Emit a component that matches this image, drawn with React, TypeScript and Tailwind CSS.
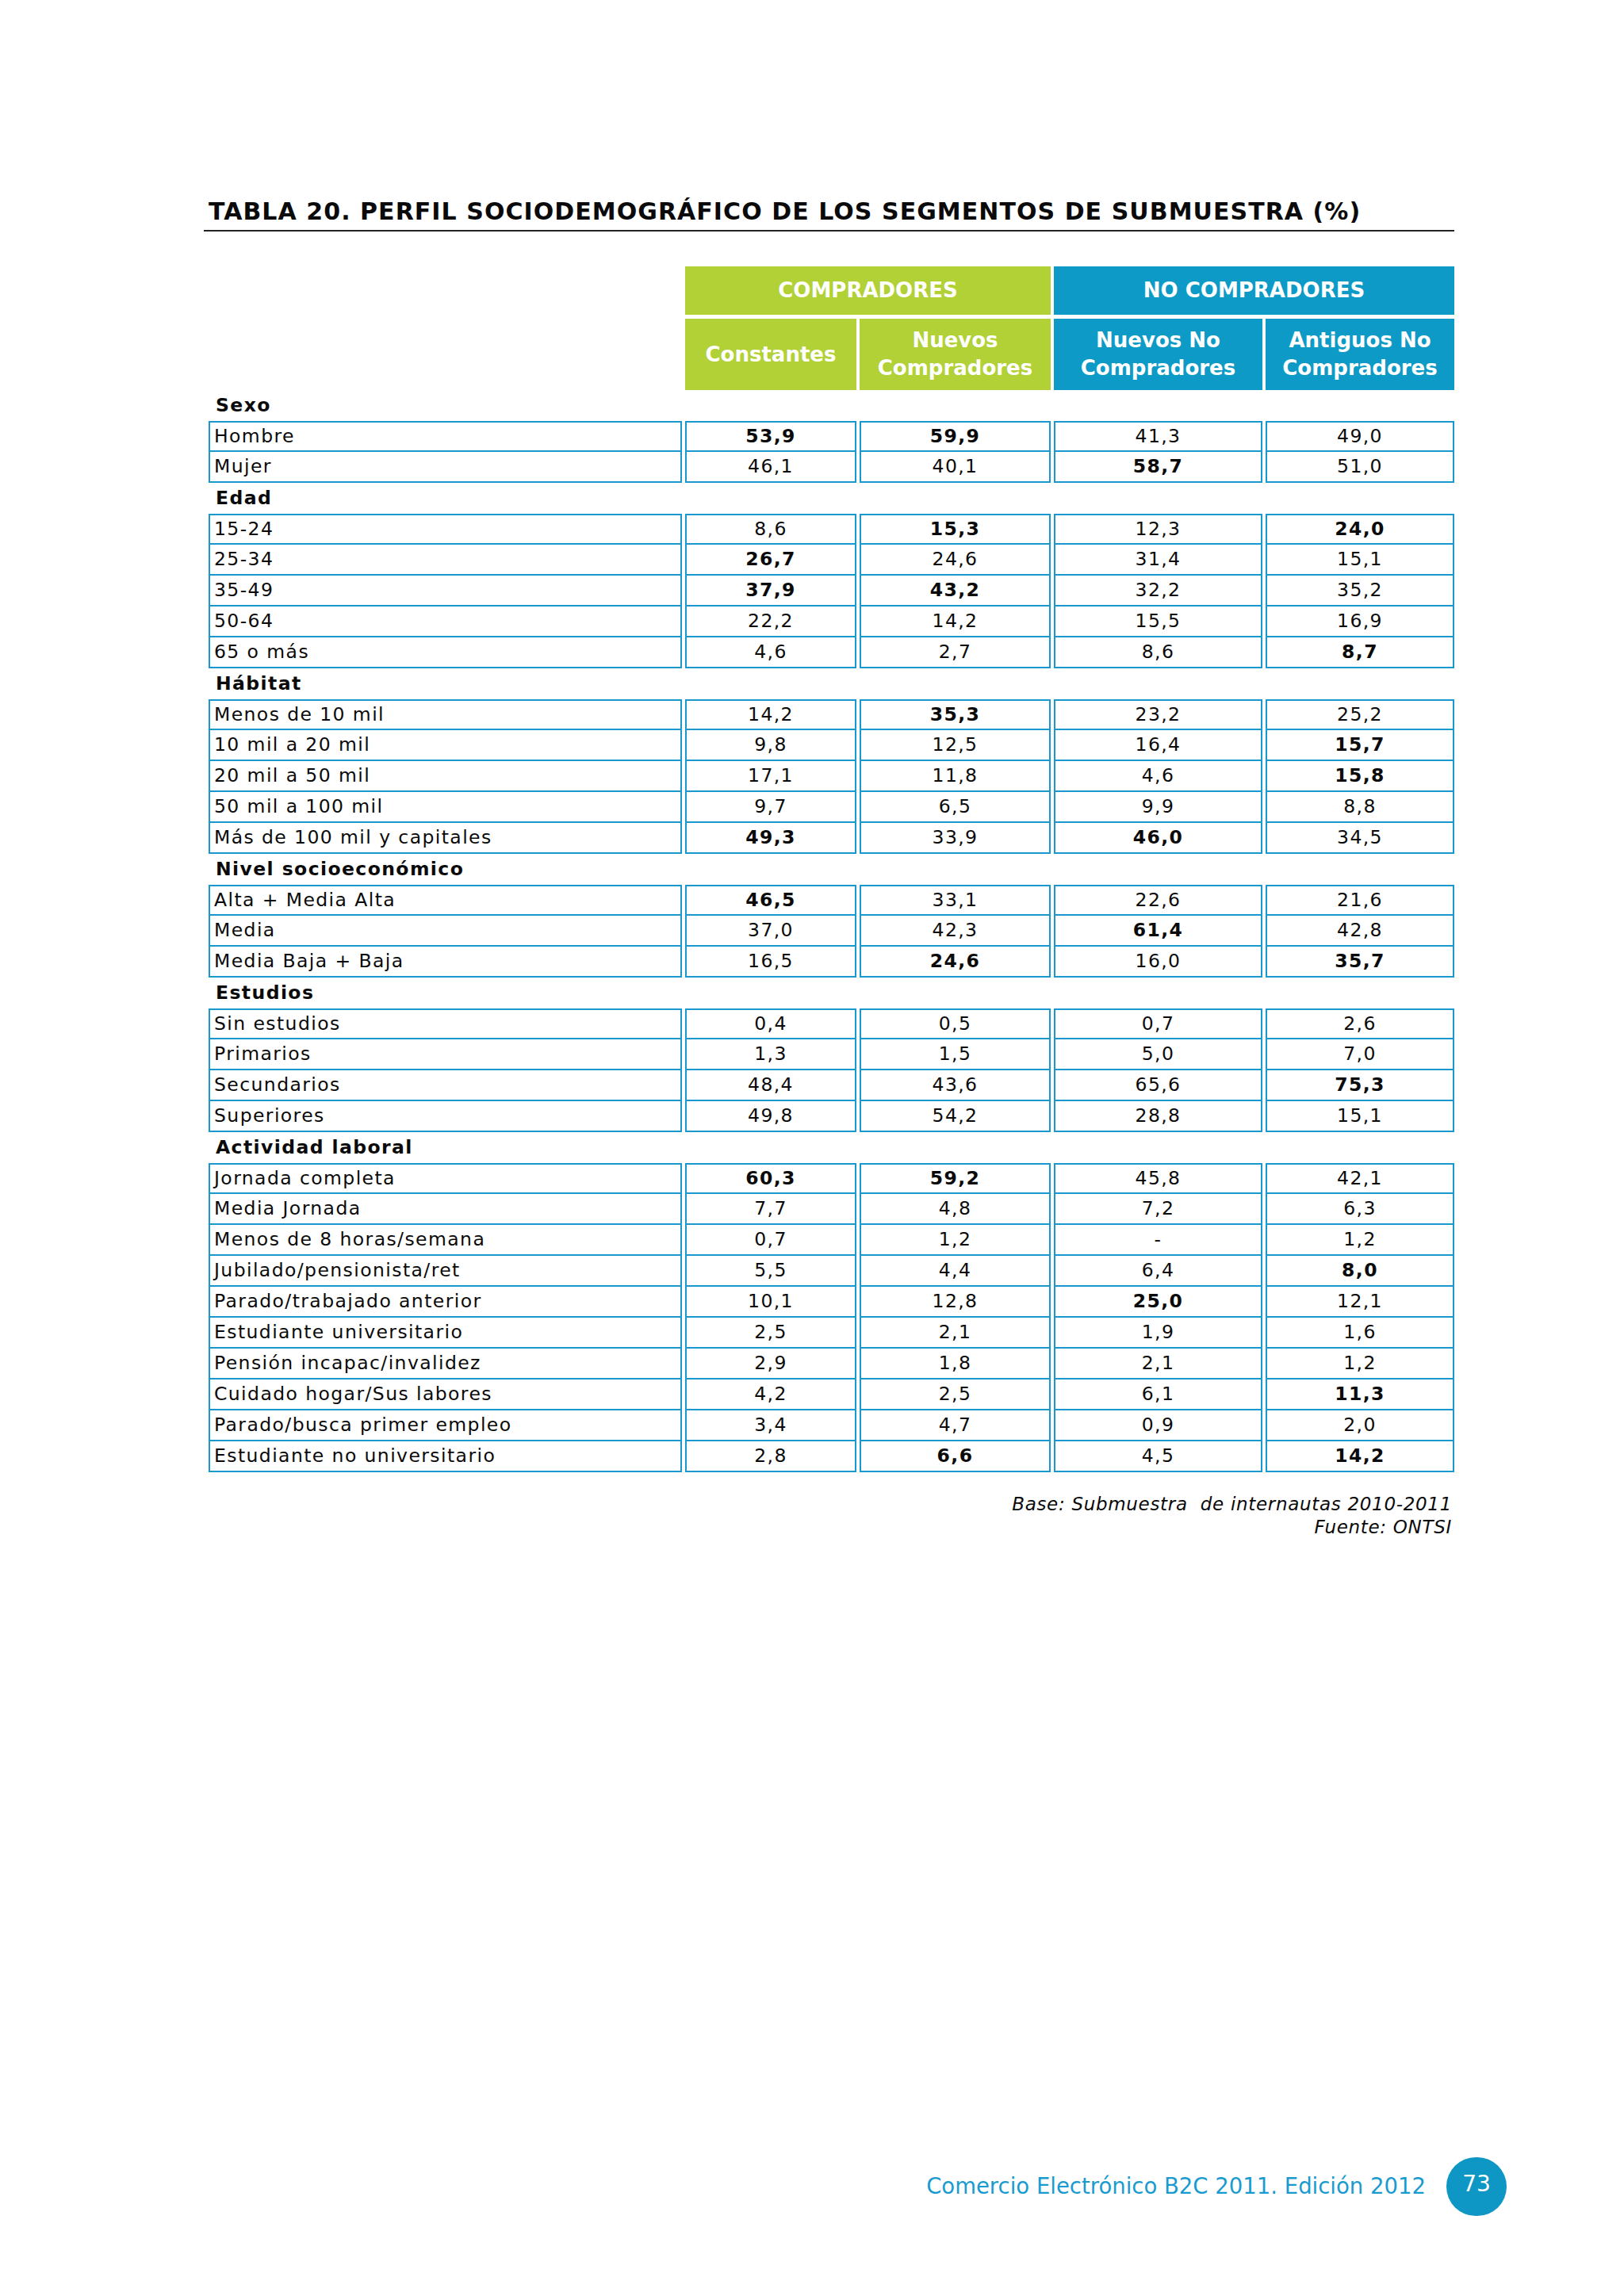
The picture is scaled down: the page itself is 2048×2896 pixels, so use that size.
import React from 'react';

type Row = { label: string; values: string[] };
type Section = { title: string; rows: Row[] };

// a leading '*' marks a value printed in bold
const sections: Section[] = [
  {
    title: 'Sexo',
    rows: [
      { label: 'Hombre', values: ['*53,9', '*59,9', '41,3', '49,0'] },
      { label: 'Mujer', values: ['46,1', '40,1', '*58,7', '51,0'] },
    ],
  },
  {
    title: 'Edad',
    rows: [
      { label: '15-24', values: ['8,6', '*15,3', '12,3', '*24,0'] },
      { label: '25-34', values: ['*26,7', '24,6', '31,4', '15,1'] },
      { label: '35-49', values: ['*37,9', '*43,2', '32,2', '35,2'] },
      { label: '50-64', values: ['22,2', '14,2', '15,5', '16,9'] },
      { label: '65 o más', values: ['4,6', '2,7', '8,6', '*8,7'] },
    ],
  },
  {
    title: 'Hábitat',
    rows: [
      { label: 'Menos de 10 mil', values: ['14,2', '*35,3', '23,2', '25,2'] },
      { label: '10 mil a 20 mil', values: ['9,8', '12,5', '16,4', '*15,7'] },
      { label: '20 mil a 50 mil', values: ['17,1', '11,8', '4,6', '*15,8'] },
      { label: '50 mil a 100 mil', values: ['9,7', '6,5', '9,9', '8,8'] },
      { label: 'Más de 100 mil y capitales', values: ['*49,3', '33,9', '*46,0', '34,5'] },
    ],
  },
  {
    title: 'Nivel socioeconómico',
    rows: [
      { label: 'Alta + Media Alta', values: ['*46,5', '33,1', '22,6', '21,6'] },
      { label: 'Media', values: ['37,0', '42,3', '*61,4', '42,8'] },
      { label: 'Media Baja + Baja', values: ['16,5', '*24,6', '16,0', '*35,7'] },
    ],
  },
  {
    title: 'Estudios',
    rows: [
      { label: 'Sin estudios', values: ['0,4', '0,5', '0,7', '2,6'] },
      { label: 'Primarios', values: ['1,3', '1,5', '5,0', '7,0'] },
      { label: 'Secundarios', values: ['48,4', '43,6', '65,6', '*75,3'] },
      { label: 'Superiores', values: ['49,8', '54,2', '28,8', '15,1'] },
    ],
  },
  {
    title: 'Actividad laboral',
    rows: [
      { label: 'Jornada completa', values: ['*60,3', '*59,2', '45,8', '42,1'] },
      { label: 'Media Jornada', values: ['7,7', '4,8', '7,2', '6,3'] },
      { label: 'Menos de 8 horas/semana', values: ['0,7', '1,2', '-', '1,2'] },
      { label: 'Jubilado/pensionista/ret', values: ['5,5', '4,4', '6,4', '*8,0'] },
      { label: 'Parado/trabajado anterior', values: ['10,1', '12,8', '*25,0', '12,1'] },
      { label: 'Estudiante universitario', values: ['2,5', '2,1', '1,9', '1,6'] },
      { label: 'Pensión incapac/invalidez', values: ['2,9', '1,8', '2,1', '1,2'] },
      { label: 'Cuidado hogar/Sus labores', values: ['4,2', '2,5', '6,1', '*11,3'] },
      { label: 'Parado/busca primer empleo', values: ['3,4', '4,7', '0,9', '2,0'] },
      { label: 'Estudiante no universitario', values: ['2,8', '*6,6', '4,5', '*14,2'] },
    ],
  },
];

const cols = 'grid grid-cols-[597px_216px_241px_263px_238px] gap-x-[4px]';

const TableSection = ({ section }: { section: Section }) => (
  <div>
    <div className="h-[39px] flex items-center pl-[9px] font-bold">{section.title}</div>
    <div className={cols}>
      {section.rows.map((row, i) => (
        <React.Fragment key={row.label}>
          <div
            className={`h-[39px] flex items-center pl-[5px] border-x-2 border-b-2 border-[#1898cc] ${
              i === 0 ? 'border-t-2' : ''
            }`}
          >
            {row.label}
          </div>
          {row.values.map((v, j) => (
            <div
              key={j}
              className={`h-[39px] flex items-center justify-center border-x-2 border-b-2 border-[#1898cc] ${
                i === 0 ? 'border-t-2' : ''
              } ${v.startsWith('*') ? 'font-bold' : ''}`}
            >
              {v.replace('*', '')}
            </div>
          ))}
        </React.Fragment>
      ))}
    </div>
  </div>
);

export default function App() {
  return (
    <div className="w-[2048px] h-[2896px] bg-white flex flex-col font-['DejaVu_Sans',sans-serif] text-[#0a0a0a]">
      {/* Title */}
      <div className="ml-[257px] w-[1577px] mt-[249px] pl-[6px] pb-[5px] border-b-2 border-[#222]">
        <h1 className="text-[30px] leading-[36px] font-bold tracking-[0.035em]">
          TABLA 20. PERFIL SOCIODEMOGRÁFICO DE LOS SEGMENTOS DE SUBMUESTRA (%)
        </h1>
      </div>

      <div className="ml-[263px] w-[1571px] text-[23.5px] tracking-[0.06em]">
        {/* Header */}
        <div className={`${cols} gap-y-[5px] mt-[44px] text-white font-bold text-[26px] leading-[35px] tracking-normal`}>
          <div />
          <div className="col-span-2 h-[61px] bg-[#b1d136] flex items-center justify-center">COMPRADORES</div>
          <div className="col-span-2 h-[61px] bg-[#0d9ac6] flex items-center justify-center">NO COMPRADORES</div>
          <div />
          <div className="h-[90px] bg-[#b1d136] flex items-center justify-center text-center">Constantes</div>
          <div className="h-[90px] bg-[#b1d136] flex items-center justify-center text-center">
            Nuevos
            <br />
            Compradores
          </div>
          <div className="h-[90px] bg-[#0d9ac6] flex items-center justify-center text-center">
            Nuevos No
            <br />
            Compradores
          </div>
          <div className="h-[90px] bg-[#0d9ac6] flex items-center justify-center text-center">
            Antiguos No
            <br />
            Compradores
          </div>
        </div>

        {sections.map((s) => (
          <TableSection key={s.title} section={s} />
        ))}

        {/* Notes */}
        <div className="mt-[26px] pr-[3px] text-right italic text-[23px] leading-[29px] tracking-[0.03em] whitespace-pre">
          <p>Base: Submuestra  de internautas 2010-2011</p>
          <p>Fuente: ONTSI</p>
        </div>
      </div>

      {/* Footer */}
      <div className="mt-auto mb-[101px] mr-[148px] flex items-center justify-end gap-[26px]">
        <span className="text-[27.5px] text-[#1a9bcf]">Comercio Electrónico B2C 2011. Edición 2012</span>
        <div className="w-[76px] h-[74px] rounded-full bg-[#0e97c4] flex items-center justify-center pb-[6px] text-white text-[28px]">
          73
        </div>
      </div>
    </div>
  );
}
